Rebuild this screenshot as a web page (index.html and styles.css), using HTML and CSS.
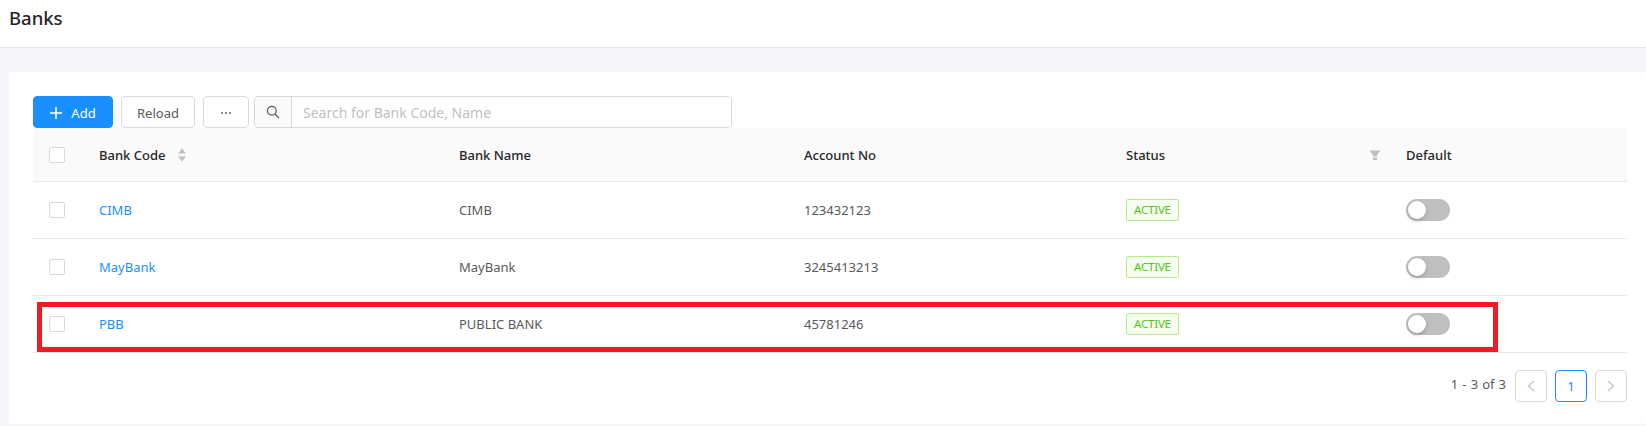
FILE: index.html
```html
<!DOCTYPE html>
<html lang="en">
<head>
<meta charset="utf-8">
<title>Banks</title>
<link rel="stylesheet" href="styles.css">
</head>
<body>
<header class="page-header"><h1>Banks</h1></header>
<main class="card">
  <div class="toolbar">
    <button class="btn btn-primary"><svg class="plus" viewBox="0 0 12 12" width="12" height="12"><path d="M6 0v12M0 6h12" stroke="#fff" stroke-width="1.6" fill="none"/></svg>Add</button>
    <button class="btn btn-reload">Reload</button>
    <button class="btn btn-more"><svg viewBox="0 0 12 4" width="12" height="4"><g fill="#595959"><circle cx="2" cy="2" r="0.9"/><circle cx="6" cy="2" r="0.9"/><circle cx="10" cy="2" r="0.9"/></g></svg></button>
    <div class="search">
      <span class="search-addon"><svg viewBox="0 0 14 14" width="14" height="14"><circle cx="5.8" cy="5.8" r="4.4" fill="none" stroke="#595959" stroke-width="1.2"/><path d="M9 9l4 4" stroke="#595959" stroke-width="1.3"/></svg></span>
      <input class="search-input" type="text" placeholder="Search for Bank Code, Name">
    </div>
  </div>
  <table class="table">
    <colgroup><col class="c-check"><col class="c-code"><col class="c-name"><col class="c-acc"><col class="c-status"><col class="c-default"></colgroup>
    <thead>
      <tr>
        <th><span class="check"></span></th>
        <th><span class="th-sort">Bank Code<svg class="sort" viewBox="0 0 10 14" width="10" height="14"><path d="M5 0.5L9 5.5H1zM5 13.5L1 8.5H9z" fill="#bfbfbf"/></svg></span></th>
        <th>Bank Name</th>
        <th>Account No</th>
        <th><span class="th-filter">Status<svg viewBox="0 0 12 12" width="12" height="12"><path d="M0.5 1.5h11L8 6v1.5H4V6zM4 8.5h4V11H4z" fill="#bfbfbf"/></svg></span></th>
        <th>Default</th>
      </tr>
    </thead>
    <tbody>
      <tr>
        <td><span class="check"></span></td><td><a class="link" href="#">CIMB</a></td><td>CIMB</td><td>123432123</td>
        <td><span class="tag">ACTIVE</span></td><td><span class="switch"><span class="knob"></span></span></td>
      </tr>
      <tr>
        <td><span class="check"></span></td><td><a class="link" href="#">MayBank</a></td><td>MayBank</td><td>3245413213</td>
        <td><span class="tag">ACTIVE</span></td><td><span class="switch"><span class="knob"></span></span></td>
      </tr>
      <tr>
        <td><span class="check"></span></td><td><a class="link" href="#">PBB</a></td><td>PUBLIC BANK</td><td>45781246</td>
        <td><span class="tag">ACTIVE</span></td><td><span class="switch"><span class="knob"></span></span></td>
      </tr>
    </tbody>
  </table>
  <nav class="pager">
    <span class="pager-total">1 - 3 of 3</span>
    <span class="page"><svg viewBox="0 0 8 12" width="8" height="12"><path d="M7 1L1.5 6L7 11" fill="none" stroke="#bfbfbf" stroke-width="1.1"/></svg></span>
    <span class="page page-active">1</span>
    <span class="page"><svg viewBox="0 0 8 12" width="8" height="12"><path d="M1 1L6.5 6L1 11" fill="none" stroke="#bfbfbf" stroke-width="1.1"/></svg></span>
  </nav>
</main>
<div class="highlight"></div>
</body>
</html>
```
FILE: styles.css
```css
* { box-sizing: border-box; }
html, body { margin: 0; padding: 0; }
body {
  width: 1646px;
  height: 426px;
  overflow: hidden;
  position: relative;
  background: #f5f6fa;
  font-family: "Noto Sans", "Open Sans", sans-serif;
  font-size: 13px;
  color: #595959;
}
.page-header {
  height: 48px;
  background: #fff;
  border-bottom: 1px solid #ebe8ec;
  padding: 6px 9px 0;
}
.page-header h1 {
  margin: 0;
  font-size: 18.5px;
  line-height: 24px;
  font-weight: 500;
  color: #262626;
}
.card {
  margin: 24px 0 0 9px;
  height: 352px;
  background: #fff;
  padding: 24px 19px 0 24px;
  border-radius: 2px;
}
.toolbar { display: flex; height: 32px; }
.btn {
  height: 32px;
  border: 1px solid #d9d9d9;
  border-radius: 4px;
  background: #fff;
  color: #595959;
  font: inherit;
  padding: 1px 0 0;
  display: flex;
  align-items: center;
  justify-content: center;
}
.btn-primary { width: 80px; background: #1890ff; border-color: #1890ff; color: #fff; margin-right: 8px; }
.plus { margin-right: 9px; }
.btn-reload { width: 74px; margin-right: 8px; }
.btn-more { width: 46px; margin-right: 5px; }
.search { width: 478px; display: flex; height: 32px; border: 1px solid #d9d9d9; border-radius: 4px; overflow: hidden; }
.search-addon {
  width: 37px;
  background: #fafafa;
  border-right: 1px solid #d9d9d9;
  display: flex;
  align-items: center;
  justify-content: center;
}
.search-input { flex: 1; min-width: 0; border: 0; outline: 0; padding: 1px 11px 0; font: inherit; font-size: 14px; color: #595959; background: #fff; }
.search-input::placeholder { color: #bfbfbf; opacity: 1; }
.table { width: 1594px; border-collapse: collapse; table-layout: fixed; }
.c-check { width: 50px; }
.c-code { width: 360px; }
.c-name { width: 345px; }
.c-acc { width: 322px; }
.c-status { width: 280px; }
.c-default { width: 237px; }
th, td { padding: 0 16px; text-align: left; border-bottom: 1px solid #e8e8e8; vertical-align: middle; }
th { height: 53px; background: #fafafa; font-weight: 500; color: #262626; padding-top: 1px; }
td { height: 57px; }
.check { display: block; width: 16px; height: 16px; border: 1px solid #d9d9d9; border-radius: 2px; background: #fff; }
.th-sort { display: inline-flex; align-items: center; gap: 12px; }
.th-filter { display: flex; align-items: center; justify-content: space-between; margin-right: -7px; }
.link { color: #1890ff; text-decoration: none; }
.tag {
  display: inline-block;
  height: 22px;
  line-height: 20px;
  padding: 0 7px;
  font-size: 11.5px;
  letter-spacing: -0.2px;
  color: #52c41a;
  background: #f6ffed;
  border: 1px solid #b7eb8f;
  border-radius: 2px;
  vertical-align: middle;
}
.switch { display: block; width: 44px; height: 22px; margin-top: 1px; border-radius: 11px; background: #bfbfbf; position: relative; }
.knob { position: absolute; left: 2px; top: 2px; width: 18px; height: 18px; border-radius: 50%; background: #fff; box-shadow: 0 2px 4px rgba(0,35,11,.2); }
.pager { display: flex; justify-content: flex-end; align-items: center; width: 1594px; margin-top: 16px; height: 34px; }
.pager-total { margin-right: 9px; word-spacing: 0.7px; padding-bottom: 3px; }
.page {
  width: 32px;
  height: 32px;
  margin-left: 8px;
  border: 1px solid #d9d9d9;
  border-radius: 4px;
  display: flex;
  align-items: center;
  justify-content: center;
  background: #fff;
}
.pager-total + .page { margin-left: 0; }
.page-active { border-color: #1890ff; color: #1890ff; }
.highlight {
  position: absolute;
  left: 37px;
  top: 302px;
  width: 1461px;
  height: 50px;
  border: 5px solid #ed1c24;
  pointer-events: none;
}
```
